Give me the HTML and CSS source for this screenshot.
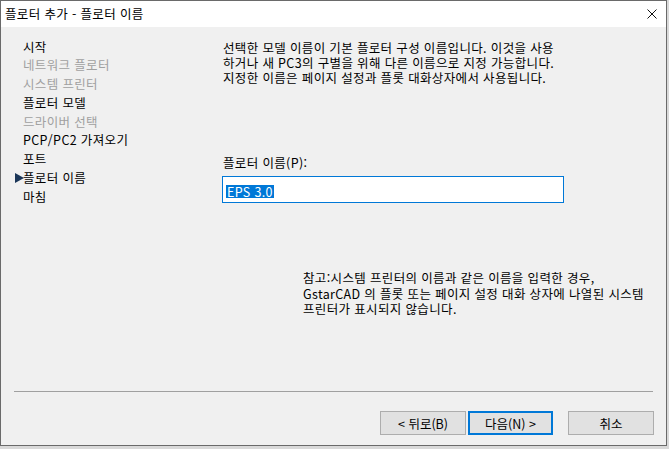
FILE: index.html
```html
<!DOCTYPE html>
<html lang="ko">
<head>
<meta charset="utf-8">
<link rel="stylesheet" href="styles.css">
</head>
<body>
<div class="window">
  <div class="titlebar">
    <span class="title">플로터 추가 - 플로터 이름</span>
    <svg class="close" width="10" height="10" viewBox="0 0 10 10"><path d="M0.5 0.5L9.5 9.5M9.5 0.5L0.5 9.5" stroke="#111" stroke-width="1" fill="none"/></svg>
  </div>
  <div class="main">
    <ul class="nav">
      <li>시작</li>
      <li class="off">네트워크 플로터</li>
      <li class="off">시스템 프린터</li>
      <li>플로터 모델</li>
      <li class="off">드라이버 선택</li>
      <li>PCP/PC2 가져오기</li>
      <li>포트</li>
      <li class="current">플로터 이름</li>
      <li>마침</li>
    </ul>
    <div class="content">
      <p class="desc">선택한 모델 이름이 기본 플로터 구성 이름입니다. 이것을 사용<br>하거나 새 PC3의 구별을 위해 다른 이름으로 지정 가능합니다.<br>지정한 이름은 페이지 설정과 플롯 대화상자에서 사용됩니다.</p>
      <label class="label">플로터 이름(P):</label>
      <div class="input"><span class="sel">EPS 3.0</span></div>
      <p class="note">참고:시스템 프린터의 이름과 같은 이름을 입력한 경우,<br>GstarCAD 의 플롯 또는 페이지 설정 대화 상자에 나열된 시스템<br>프린터가 표시되지 않습니다.</p>
    </div>
  </div>
  <div class="separator"></div>
  <div class="buttons">
    <button class="btn">&lt; 뒤로(B)</button>
    <button class="btn default">다음(N) &gt;</button>
    <button class="btn cancel">취소</button>
  </div>
</div>
</body>
</html>
```
FILE: styles.css
```css
* { box-sizing: border-box; }
html, body { margin: 0; padding: 0; }
body {
  width: 669px;
  height: 449px;
  background: #d9d9d9;
  font-family: "Noto Sans CJK KR", "Noto Sans", sans-serif;
  font-size: 12.5px;
  letter-spacing: 0.35px;
  color: #000;
  overflow: hidden;
}
.window {
  width: 667px;
  height: 446px;
  border: 1px solid #6a6a6a;
  background: #f0f0f0;
  display: flex;
  flex-direction: column;
}
.titlebar {
  height: 26px;
  background: #fff;
  display: flex;
  align-items: center;
  justify-content: space-between;
  padding: 0 9px 0 4px;
  flex: none;
}
.title { line-height: 14px; }
.close { display: block; margin-top: -1px; }
.main {
  flex: 1;
  display: flex;
}
.nav {
  list-style: none;
  margin: 0;
  padding: 10.6px 0 0 22px;
  width: 221px;
}
.nav li {
  height: 18.75px;
  line-height: 18.75px;
  white-space: nowrap;
  position: relative;
}
.nav li.off { color: #a0a0a0; }
.nav li.current::before {
  content: "";
  position: absolute;
  left: -8px;
  top: 4.5px;
  border-left: 9px solid #1b3658;
  border-top: 5px solid transparent;
  border-bottom: 5px solid transparent;
}
.content {
  flex: 1;
  display: flex;
  flex-direction: column;
  align-items: flex-start;
}
.desc {
  margin: 13px 0 0 1px;
  line-height: 15px;
  white-space: nowrap;
}
.label {
  margin: 71px 0 0 1px;
  line-height: 14px;
}
.input {
  margin-top: 6px;
  width: 342px;
  height: 27px;
  border: 1px solid #0078d7;
  background: #fff;
  padding: 5px 0 0 3px;
}
.sel {
  display: inline-block;
  background: #0078d7;
  color: #fff;
  height: 13px;
  line-height: 13px;
  padding: 0 1px;
}
.note {
  margin: 67px 0 0 81px;
  line-height: 15.5px;
  white-space: nowrap;
}
.separator {
  flex: none;
  margin: 0 13px 0 13px;
  border-top: 1px solid #a0a0a0;
}
.buttons {
  flex: none;
  display: flex;
  justify-content: flex-end;
  padding: 19px 12px 10px 0;
}
.btn {
  font: inherit;
  color: #000;
  width: 86px;
  height: 24px;
  background: #e1e1e1;
  border: 1px solid #adadad;
  padding: 0;
  margin: 0;
}
.btn.default {
  border: 2px solid #0078d7;
  margin-left: 2px;
  width: 85px;
}
.btn.cancel { margin-left: 15px; }
```
